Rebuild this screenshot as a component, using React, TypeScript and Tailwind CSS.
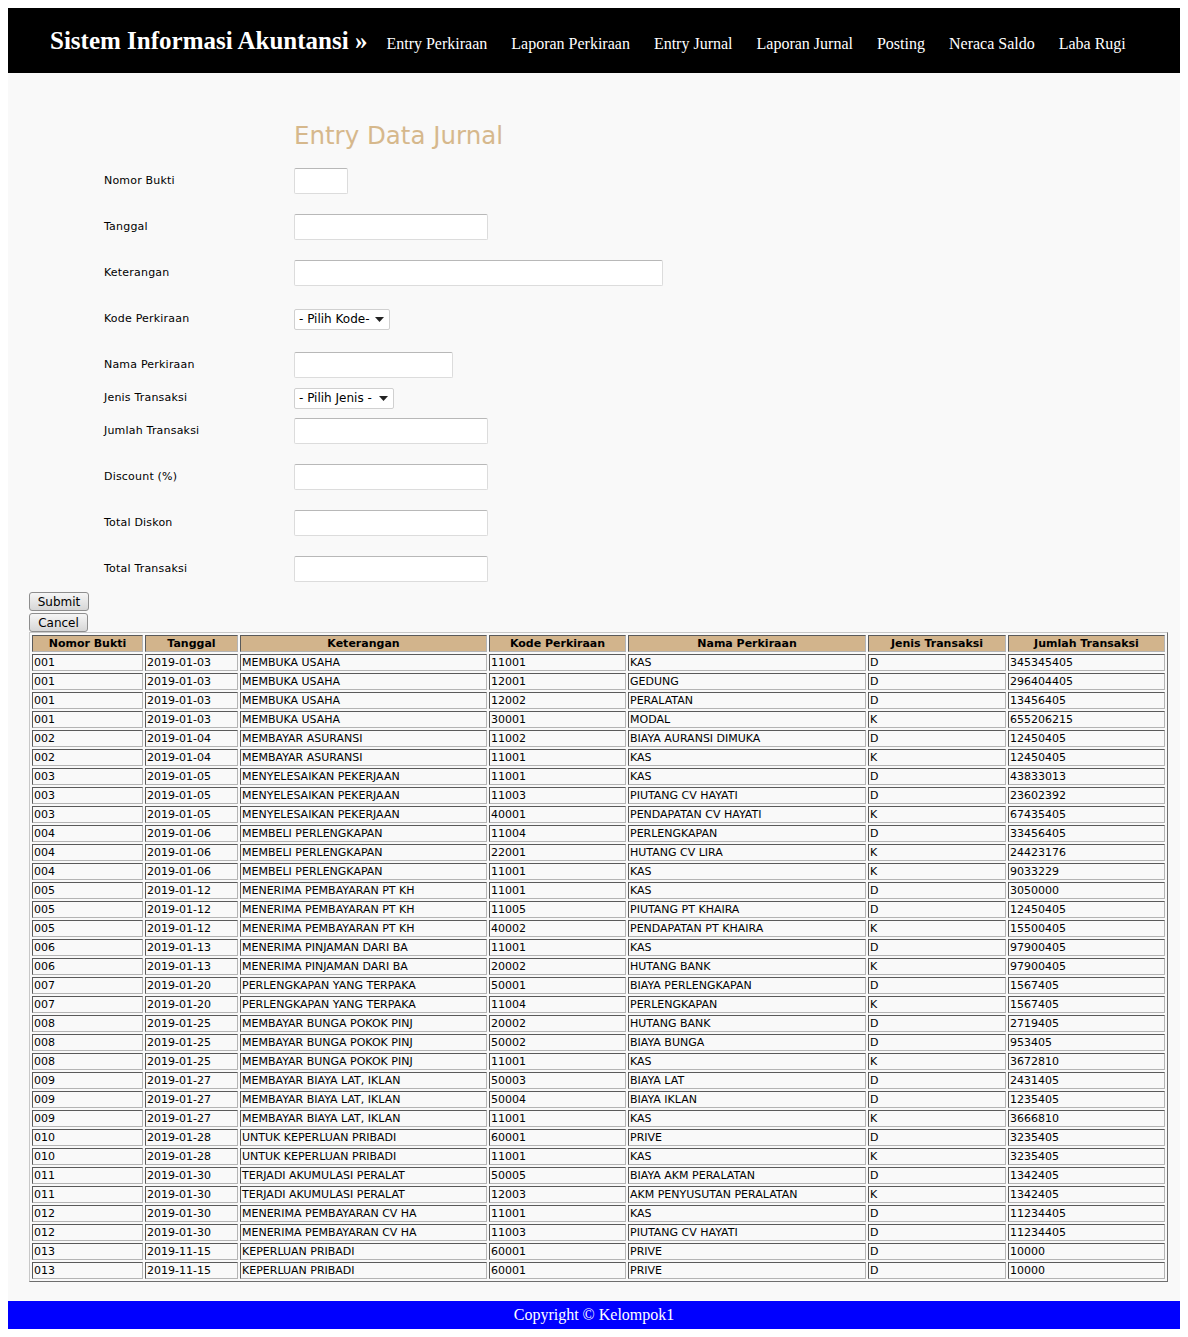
import React from "react";

type Row = [string, string, string, string, string, string, string];

const rows: Row[] = [
  ["001", "2019-01-03", "MEMBUKA USAHA", "11001", "KAS", "D", "345345405"],
  ["001", "2019-01-03", "MEMBUKA USAHA", "12001", "GEDUNG", "D", "296404405"],
  ["001", "2019-01-03", "MEMBUKA USAHA", "12002", "PERALATAN", "D", "13456405"],
  ["001", "2019-01-03", "MEMBUKA USAHA", "30001", "MODAL", "K", "655206215"],
  ["002", "2019-01-04", "MEMBAYAR ASURANSI", "11002", "BIAYA AURANSI DIMUKA", "D", "12450405"],
  ["002", "2019-01-04", "MEMBAYAR ASURANSI", "11001", "KAS", "K", "12450405"],
  ["003", "2019-01-05", "MENYELESAIKAN PEKERJAAN", "11001", "KAS", "D", "43833013"],
  ["003", "2019-01-05", "MENYELESAIKAN PEKERJAAN", "11003", "PIUTANG CV HAYATI", "D", "23602392"],
  ["003", "2019-01-05", "MENYELESAIKAN PEKERJAAN", "40001", "PENDAPATAN CV HAYATI", "K", "67435405"],
  ["004", "2019-01-06", "MEMBELI PERLENGKAPAN", "11004", "PERLENGKAPAN", "D", "33456405"],
  ["004", "2019-01-06", "MEMBELI PERLENGKAPAN", "22001", "HUTANG CV LIRA", "K", "24423176"],
  ["004", "2019-01-06", "MEMBELI PERLENGKAPAN", "11001", "KAS", "K", "9033229"],
  ["005", "2019-01-12", "MENERIMA PEMBAYARAN PT KH", "11001", "KAS", "D", "3050000"],
  ["005", "2019-01-12", "MENERIMA PEMBAYARAN PT KH", "11005", "PIUTANG PT KHAIRA", "D", "12450405"],
  ["005", "2019-01-12", "MENERIMA PEMBAYARAN PT KH", "40002", "PENDAPATAN PT KHAIRA", "K", "15500405"],
  ["006", "2019-01-13", "MENERIMA PINJAMAN DARI BA", "11001", "KAS", "D", "97900405"],
  ["006", "2019-01-13", "MENERIMA PINJAMAN DARI BA", "20002", "HUTANG BANK", "K", "97900405"],
  ["007", "2019-01-20", "PERLENGKAPAN YANG TERPAKA", "50001", "BIAYA PERLENGKAPAN", "D", "1567405"],
  ["007", "2019-01-20", "PERLENGKAPAN YANG TERPAKA", "11004", "PERLENGKAPAN", "K", "1567405"],
  ["008", "2019-01-25", "MEMBAYAR BUNGA POKOK PINJ", "20002", "HUTANG BANK", "D", "2719405"],
  ["008", "2019-01-25", "MEMBAYAR BUNGA POKOK PINJ", "50002", "BIAYA BUNGA", "D", "953405"],
  ["008", "2019-01-25", "MEMBAYAR BUNGA POKOK PINJ", "11001", "KAS", "K", "3672810"],
  ["009", "2019-01-27", "MEMBAYAR BIAYA LAT, IKLAN", "50003", "BIAYA LAT", "D", "2431405"],
  ["009", "2019-01-27", "MEMBAYAR BIAYA LAT, IKLAN", "50004", "BIAYA IKLAN", "D", "1235405"],
  ["009", "2019-01-27", "MEMBAYAR BIAYA LAT, IKLAN", "11001", "KAS", "K", "3666810"],
  ["010", "2019-01-28", "UNTUK KEPERLUAN PRIBADI", "60001", "PRIVE", "D", "3235405"],
  ["010", "2019-01-28", "UNTUK KEPERLUAN PRIBADI", "11001", "KAS", "K", "3235405"],
  ["011", "2019-01-30", "TERJADI AKUMULASI PERALAT", "50005", "BIAYA AKM PERALATAN", "D", "1342405"],
  ["011", "2019-01-30", "TERJADI AKUMULASI PERALAT", "12003", "AKM PENYUSUTAN PERALATAN", "K", "1342405"],
  ["012", "2019-01-30", "MENERIMA PEMBAYARAN CV HA", "11001", "KAS", "D", "11234405"],
  ["012", "2019-01-30", "MENERIMA PEMBAYARAN CV HA", "11003", "PIUTANG CV HAYATI", "D", "11234405"],
  ["013", "2019-11-15", "KEPERLUAN PRIBADI", "60001", "PRIVE", "D", "10000"],
  ["013", "2019-11-15", "KEPERLUAN PRIBADI", "60001", "PRIVE", "D", "10000"],
];

const heads = [
  { label: "Nomor Bukti", w: "w-[111px]" },
  { label: "Tanggal", w: "w-[93px]" },
  { label: "Keterangan", w: "w-[247px]" },
  { label: "Kode Perkiraan", w: "w-[137px]" },
  { label: "Nama Perkiraan", w: "w-[238px]" },
  { label: "Jenis Transaksi", w: "w-[138px]" },
  { label: "Jumlah Transaksi", w: "w-[157px]" },
];

const navLinks = ["Entry Perkiraan", "Laporan Perkiraan", "Entry Jurnal", "Laporan Jurnal", "Posting", "Neraca Saldo", "Laba Rugi"];

const cellBorder = "border border-t-[#5a5a5a] border-l-[#5a5a5a] border-b-[#b4b4b4] border-r-[#b4b4b4]";

function TextBox({ w }: { w: string }) {
  return <input type="text" className={`${w} h-[26px] rounded-[2px] border border-[#dcdcdc] border-t-[#b8b8b8] bg-white`} />;
}

function FakeSelect({ w, label }: { w: string; label: string }) {
  return (
    <div className={`${w} flex h-[21px] items-center justify-between rounded-[2px] border border-[#d0d0d0] bg-white pl-[4px] pr-[4px] text-[12px] text-black`}>
      <span>{label}</span>
      <svg width="9" height="5" viewBox="0 0 9 5" className="mr-[1px]">
        <path d="M0 0 L9 0 L4.5 5 Z" fill="#222" />
      </svg>
    </div>
  );
}

function FormRow({ label, mt, children }: { label: string; mt: string; children: React.ReactNode }) {
  return (
    <div className={`flex h-[26px] items-center ${mt}`}>
      <div className="w-[286px] shrink-0 pl-[96px] text-[11px] tracking-[0.2px] text-black">{label}</div>
      {children}
    </div>
  );
}

function Btn({ label, w }: { label: string; w: string }) {
  return (
    <button className={`${w} h-[19px] rounded-[3px] border border-[#8e8e8e] bg-gradient-to-b from-[#f6f6f6] to-[#d6d6d6] text-[12px] leading-[16px] text-black`}>
      {label}
    </button>
  );
}

export default function App() {
  return (
    <div className="m-[8px] font-['Verdana','DejaVu_Sans',sans-serif]">
      <header className="flex h-[65px] items-baseline bg-black pl-[42px] pt-[19px] font-['Liberation_Serif','Times_New_Roman',serif] text-white">
        <h1 className="mr-[19px] text-[25px] font-bold leading-[28px]">Sistem Informasi Akuntansi »</h1>
        <nav className="flex items-baseline gap-[24px] text-[16px]">
          {navLinks.map((n) => (
            <a key={n} href="#" className="text-white">{n}</a>
          ))}
        </nav>
      </header>

      <main className="bg-[#f9f9f9] pb-[19px] pt-[49px]">
        <h2 className="ml-[286px] text-[24.5px] leading-[28px] text-[#d6b88c]">Entry Data Jurnal</h2>
        <div className="mt-[18px]">
          <FormRow label="Nomor Bukti" mt="mt-0"><TextBox w="w-[54px]" /></FormRow>
          <FormRow label="Tanggal" mt="mt-[20px]"><TextBox w="w-[194px]" /></FormRow>
          <FormRow label="Keterangan" mt="mt-[20px]"><TextBox w="w-[369px]" /></FormRow>
          <FormRow label="Kode Perkiraan" mt="mt-[20px]"><FakeSelect w="w-[96px]" label="- Pilih Kode-" /></FormRow>
          <FormRow label="Nama Perkiraan" mt="mt-[20px]"><TextBox w="w-[159px]" /></FormRow>
          <FormRow label="Jenis Transaksi" mt="mt-[7px]"><FakeSelect w="w-[100px]" label="- Pilih Jenis -" /></FormRow>
          <FormRow label="Jumlah Transaksi" mt="mt-[7px]"><TextBox w="w-[194px]" /></FormRow>
          <FormRow label="Discount (%)" mt="mt-[20px]"><TextBox w="w-[194px]" /></FormRow>
          <FormRow label="Total Diskon" mt="mt-[20px]"><TextBox w="w-[194px]" /></FormRow>
          <FormRow label="Total Transaksi" mt="mt-[20px]"><TextBox w="w-[194px]" /></FormRow>
        </div>

        <div className="ml-[21px] mt-[10px] flex flex-col items-start gap-[2px]">
          <Btn label="Submit" w="w-[60px]" />
          <Btn label="Cancel" w="w-[59px]" />
        </div>

        <table className="ml-[21px] w-[1139px] table-fixed border-separate border-spacing-[2px] border border-t-[#c8c8c8] border-l-[#c8c8c8] border-b-[#6e6e6e] border-r-[#6e6e6e] text-[11px] leading-[13px] text-black">
          <thead>
            <tr>
              {heads.map((h) => (
                <th key={h.label} className={`${h.w} ${cellBorder} bg-[#d2b48c] p-px text-center font-bold`}>
                  {h.label}
                </th>
              ))}
            </tr>
          </thead>
          <tbody>
            {rows.map((r, i) => (
              <tr key={i}>
                {r.map((c, j) => (
                  <td key={j} className={`${cellBorder} overflow-hidden whitespace-nowrap p-px text-left`}>
                    {c}
                  </td>
                ))}
              </tr>
            ))}
          </tbody>
        </table>
      </main>

      <footer className="flex h-[28px] items-center justify-center bg-[#0000ff] font-['Liberation_Serif','Times_New_Roman',serif] text-[16px] text-white">
        Copyright © Kelompok1
      </footer>
    </div>
  );
}
